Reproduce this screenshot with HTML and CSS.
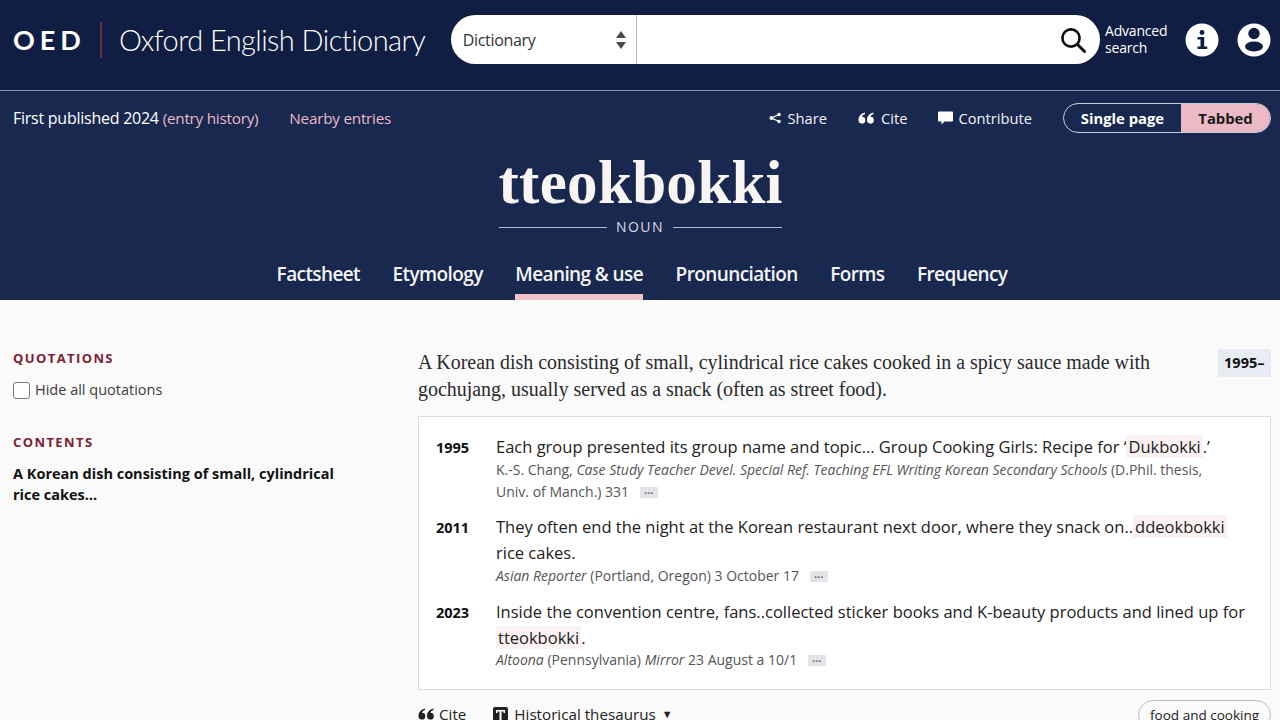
FILE: index.html
```html
<!DOCTYPE html>
<html lang="en">
<head>
    <meta charset="UTF-8">
    <title>tteokbokki - Oxford English Dictionary</title>
    <link rel="stylesheet" href="styles.css">
</head>
<body>
    <header class="top-bar">
        <div class="logo">
            <span class="logo-oed">OED</span>
            <span class="logo-name">Oxford English Dictionary</span>
        </div>
        <div class="search">
            <div class="search-select">
                <span>Dictionary</span>
                <svg class="select-arrows" width="12" height="20" viewBox="0 0 12 20"><path d="M6 1l5 7H1zM1 12h10l-5 7z" fill="#4a4a4a"/></svg>
            </div>
            <div class="search-input">
                <svg width="28" height="28" viewBox="0 0 28 28"><circle cx="12" cy="12" r="8.6" fill="none" stroke="#0c0c0c" stroke-width="2.6"/><path d="M18.5 18.5l7 7" stroke="#0c0c0c" stroke-width="3" stroke-linecap="round"/></svg>
            </div>
        </div>
        <a class="advanced">Advanced<br>search</a>
        <div class="round-icon info">
            <svg width="34" height="34" viewBox="0 0 34 34"><circle cx="17" cy="17" r="16.5" fill="#fff"/><circle cx="17" cy="9.5" r="2.4" fill="#0f1e42"/><path d="M12.5 14h6.7v9.5h3v2.5h-9.7v-2.5h3v-7h-3z" fill="#0f1e42"/></svg>
        </div>
        <div class="round-icon">
            <svg width="34" height="34" viewBox="0 0 34 34"><circle cx="17" cy="17" r="16.5" fill="#fff"/><circle cx="17" cy="10.500" r="5.700" fill="#0f1e42"/><ellipse cx="17" cy="23.500" rx="9" ry="5" fill="#0f1e42"/></svg>
        </div>
    </header>

    <section class="entry-head">
        <div class="entry-bar">
            <div class="entry-meta">
                <span class="published">First published 2024 <a class="pink history">(entry history)</a></span>
                <a class="pink nearby">Nearby entries</a>
            </div>
            <div class="entry-actions">
                <a class="action share">
                    <svg width="12" height="12" viewBox="0 0 12 12"><path d="M10 2.500L2.500 6l7.500 3.500" fill="none" stroke="#fff" stroke-width="1.200"/><circle cx="2.500" cy="6" r="2" fill="#fff"/><circle cx="10" cy="2.500" r="1.800" fill="#fff"/><circle cx="10" cy="9.500" r="1.800" fill="#fff"/></svg>
                    Share
                </a>
                <a class="action cite">
                    <svg width="16" height="12" viewBox="0 0 16 12"><path d="M7 0.500C3 1.500 0.500 4 0.500 8a3.400 3.400 0 1 0 3.400-3.300c.3-1.300 1.500-2.300 3.100-2.800zM15.500 0.500c-4 1-6.500 3.500-6.500 7.500a3.400 3.400 0 1 0 3.400-3.300c.3-1.300 1.500-2.300 3.100-2.800z" fill="#fff"/></svg>
                    Cite
                </a>
                <a class="action contribute">
                    <svg width="15" height="14" viewBox="0 0 15 14"><path d="M1 0.500h13a1 1 0 0 1 1 1v8a1 1 0 0 1-1 1H6.500L3.500 13.500v-3H1a1 1 0 0 1-1-1v-8a1 1 0 0 1 1-1z" fill="#fff"/></svg>
                    Contribute
                </a>
                <div class="view-toggle">
                    <span class="view-single">Single page</span>
                    <span class="view-tabbed">Tabbed</span>
                </div>
            </div>
        </div>

        <div class="headword-block">
            <h1 class="headword">tteokbokki</h1>
            <div class="pos"><span>NOUN</span></div>
        </div>

        <nav class="tabs">
            <a>Factsheet</a>
            <a>Etymology</a>
            <a class="active">Meaning &amp; use</a>
            <a>Pronunciation</a>
            <a>Forms</a>
            <a>Frequency</a>
        </nav>
    </section>

    <main class="content">
        <aside class="sidebar">
            <h2 class="side-title">QUOTATIONS</h2>
            <label class="hide-quotes"><span class="checkbox"></span>Hide all quotations</label>
            <h2 class="side-title contents-title">CONTENTS</h2>
            <a class="contents-link">A Korean dish consisting of small, cylindrical rice cakes…</a>
        </aside>

        <div class="sense">
            <div class="definition">
                <p>A Korean dish consisting of small, cylindrical rice cakes cooked in a spicy sauce made with gochujang, usually served as a snack (often as street food).</p>
                <span class="date-range">1995–</span>
            </div>

            <div class="quotes">
                <div class="quote">
                    <span class="year">1995</span>
                    <div>
                        <p class="quote-text">Each group presented its group name and topic… Group Cooking Girls: Recipe for ‘<mark>Dukbokki</mark>.’</p>
                        <p class="quote-src">K.-S. Chang, <i>Case Study Teacher Devel. Special Ref. Teaching EFL Writing Korean Secondary Schools</i> (D.Phil. thesis, Univ.&nbsp;of&nbsp;Manch.) 331 <span class="more">···</span></p>
                    </div>
                </div>
                <div class="quote">
                    <span class="year">2011</span>
                    <div>
                        <p class="quote-text">They often end the night at the Korean restaurant next door, where they snack on..<mark>ddeokbokki</mark> rice&nbsp;cakes.</p>
                        <p class="quote-src"><i>Asian Reporter</i> (Portland, Oregon) 3 October 17 <span class="more">···</span></p>
                    </div>
                </div>
                <div class="quote">
                    <span class="year">2023</span>
                    <div>
                        <p class="quote-text">Inside the convention centre, fans..collected sticker books and K-beauty products and lined up for <mark>tteokbokki</mark>.</p>
                        <p class="quote-src"><i>Altoona</i> (Pennsylvania) <i>Mirror</i> 23 August a 10/1 <span class="more">···</span></p>
                    </div>
                </div>
            </div>

            <div class="sense-foot">
                <a class="foot-link">
                    <svg width="16" height="12" viewBox="0 0 16 12"><path d="M7 0.500C3 1.500 0.500 4 0.500 8a3.400 3.400 0 1 0 3.400-3.300c.3-1.300 1.500-2.300 3.100-2.800zM15.500 0.500c-4 1-6.500 3.500-6.500 7.500a3.400 3.400 0 1 0 3.400-3.300c.3-1.300 1.500-2.300 3.100-2.800z" fill="#222"/></svg>
                    Cite
                </a>
                <a class="foot-link thes">
                    <svg width="15" height="15" viewBox="0 0 15 15"><rect width="15" height="15" rx="2" fill="#222"/><path d="M3 3h9v3h-1.500v-1.500H8.500V15h-2V4.500H4.500V6H3z" fill="#fff"/></svg>
                    Historical thesaurus <span class="caret">▼</span>
                </a>
                <span class="topic">food and cooking</span>
            </div>
        </div>
    </main>
</body>
</html>
```

FILE: styles.css
```css
*, *::after, *::before{
    margin: 0;
    padding: 0;
    box-sizing: border-box;
}
:root {
    --dark: #0f1e42;
    --navy: #18284f;
    --pink: #ecb9c6;
    --maroon: #7c2233;
}

html, body{
    height: 720px;
    overflow: hidden;
}
body{
    background-color: #fafafa;
    font-family: "Open Sans", "Noto Sans", sans-serif;
    color: #222;
}

/* top bar */
.top-bar{
    height: 91px;
    background-color: var(--dark);
    border-bottom: 1px solid #8e96ad;
    display: flex;
    align-items: flex-start;
    padding: 15px 9px 0 13px;
}
.logo{
    width: 438px;
    height: 50px;
    display: flex;
    align-items: center;
    color: #fff;
}
.logo-oed{
    font-family: "Lato", sans-serif;
    font-weight: 700;
    font-size: 27px;
    letter-spacing: 5px;
    padding-right: 14px;
    height: 36px;
    line-height: 36px;
    border-right: 2px solid #6e2a3a;
}
.logo-name{
    font-family: "Lato", sans-serif;
    font-weight: 300;
    font-size: 29px;
    letter-spacing: -0.55px;
    padding: 0 0 2px 17px;
    white-space: nowrap;
}
.search{
    width: 650px;
    height: 49px;
    display: flex;
    background-color: #fff;
    border-radius: 25px;
    overflow: hidden;
}
.search-select{
    width: 186px;
    border-right: 1px solid #b9bcc6;
    padding: 0 9px 0 12px;
    display: flex;
    align-items: center;
    justify-content: space-between;
    font-size: 16px;
    letter-spacing: -0.3px;
    color: #333;
}
.search-input{
    flex: 1;
    display: flex;
    align-items: center;
    justify-content: flex-end;
    padding-right: 13px;
}
.advanced{
    width: 85px;
    padding: 8px 0 0 5px;
    font-size: 14px;
    line-height: 16.500px;
    letter-spacing: -0.2px;
    color: #fff;
}
.round-icon{
    width: 34px;
    height: 34px;
    margin-top: 8px;
    margin-left: 18px;
}
.round-icon.info{
    margin-left: 0;
}

/* entry header */
.entry-head{
    height: 209px;
    background-color: var(--navy);
    color: #fff;
}
.entry-bar{
    display: flex;
    justify-content: space-between;
    align-items: center;
    padding: 12px 9px 0 13px;
}
.entry-meta{
    display: flex;
    align-items: center;
    font-size: 16px;
    letter-spacing: -0.25px;
}
.pink{
    color: var(--pink);
}
.history{
    font-size: 15.300px;
}
.nearby{
    margin-left: 31px;
    font-size: 15.300px;
}
.entry-actions{
    display: flex;
    align-items: center;
    font-size: 14.700px;
}
.action{
    display: flex;
    align-items: center;
    gap: 7px;
    color: #f2f2f5;
    margin-right: 31px;
}
.contribute{
    gap: 5px;
}
.view-toggle{
    display: flex;
    height: 30px;
    border: 1px solid #c9cdd8;
    border-radius: 15px;
    overflow: hidden;
    font-weight: 700;
    font-size: 14.800px;
    line-height: 28px;
}
.view-single{
    width: 117px;
    text-align: center;
    color: #fff;
}
.view-tabbed{
    width: 89px;
    text-align: center;
    color: #1a1a1a;
    background-color: var(--pink);
}
.headword-block{
    width: 283px;
    margin: 20px auto 0;
    text-align: center;
}
.headword{
    font-family: "Liberation Serif", serif;
    font-weight: 700;
    font-size: 61px;
    line-height: 60px;
    letter-spacing: 0.3px;
    white-space: nowrap;
    color: #f7f4f2;
}
.pos{
    display: flex;
    align-items: center;
    gap: 9px;
    margin-top: 4px;
    font-size: 14px;
    letter-spacing: 1.400px;
    line-height: 20px;
    color: #d9dbe3;
}
.pos::before, .pos::after{
    content: "";
    flex: 1;
    height: 1px;
    background-color: #b4b8c8;
}
.tabs{
    display: flex;
    justify-content: center;
    gap: 32.500px;
    margin-top: 24px;
    padding-left: 4px;
    font-size: 19px;
    letter-spacing: -0.6px;
    font-weight: 600;
}
.tabs a{
    height: 39px;
    line-height: 26px;
    color: #f4f4f6;
}
.tabs .active{
    border-bottom: 6px solid #f3c3cd;
}

/* main content */
.content{
    display: flex;
    padding: 0 9px 0 13px;
}
.sidebar{
    width: 405px;
    flex: none;
    padding-top: 50px;
}
.side-title{
    font-size: 13px;
    font-weight: 700;
    letter-spacing: 1.400px;
    line-height: 16px;
    color: var(--maroon);
}
.hide-quotes{
    display: flex;
    align-items: center;
    gap: 5px;
    margin-top: 14px;
    font-size: 14.500px;
    line-height: 20px;
    color: #3c3c3c;
}
.checkbox{
    width: 17px;
    height: 17px;
    background-color: #fff;
    border: 1px solid #777;
    border-radius: 3px;
}
.contents-title{
    margin-top: 34px;
}
.contents-link{
    display: block;
    width: 340px;
    margin-top: 13px;
    font-size: 14.500px;
    font-weight: 700;
    line-height: 21px;
    color: #111;
}
.sense{
    flex: 1;
    padding-top: 49px;
}
.definition{
    display: flex;
    justify-content: space-between;
    align-items: flex-start;
    height: 67px;
}
.definition p{
    width: 750px;
    font-family: "Liberation Serif", serif;
    font-size: 19.950px;
    line-height: 27px;
    color: #2a2a2a;
}
.date-range{
    padding: 0 6.500px;
    height: 28px;
    line-height: 28px;
    font-size: 14.500px;
    font-weight: 700;
    color: #111;
    background-color: #e9ebf2;
}
.quotes{
    height: 274px;
    background-color: #fff;
    border: 1px solid #dcdcdc;
    padding: 17px 17px 0;
}
.quote{
    display: flex;
    margin-bottom: 11.900px;
}
.year{
    width: 60px;
    flex: none;
    font-size: 14.500px;
    font-weight: 700;
    line-height: 28px;
    color: #111;
}
.quote-text{
    font-size: 16.500px;
    line-height: 26px;
    color: #222;
}
.quote-src{
    margin-top: -1.500px;
    font-size: 14px;
    line-height: 22px;
    color: #555;
}
mark{
    background-color: #fbf1f2;
    padding: 0 2px;
    color: #222;
}
.more{
    display: inline-block;
    width: 18px;
    height: 11px;
    margin-left: 7px;
    background-color: #e4e4e8;
    font-size: 11px;
    line-height: 11px;
    font-weight: 700;
    text-align: center;
    color: #666;
}
.sense-foot{
    display: flex;
    align-items: flex-start;
    padding-top: 14px;
    font-size: 15.200px;
    line-height: 20px;
    color: #222;
}
.foot-link{
    display: flex;
    align-items: center;
    gap: 5px;
    margin-right: 27px;
}
.thes{
    gap: 6px;
}
.caret{
    font-size: 11px;
}
.topic{
    margin-left: auto;
    margin-top: -4px;
    padding: 4px 11px;
    border: 1px solid #b9bcc6;
    border-radius: 15px;
    font-size: 13.500px;
}
```
